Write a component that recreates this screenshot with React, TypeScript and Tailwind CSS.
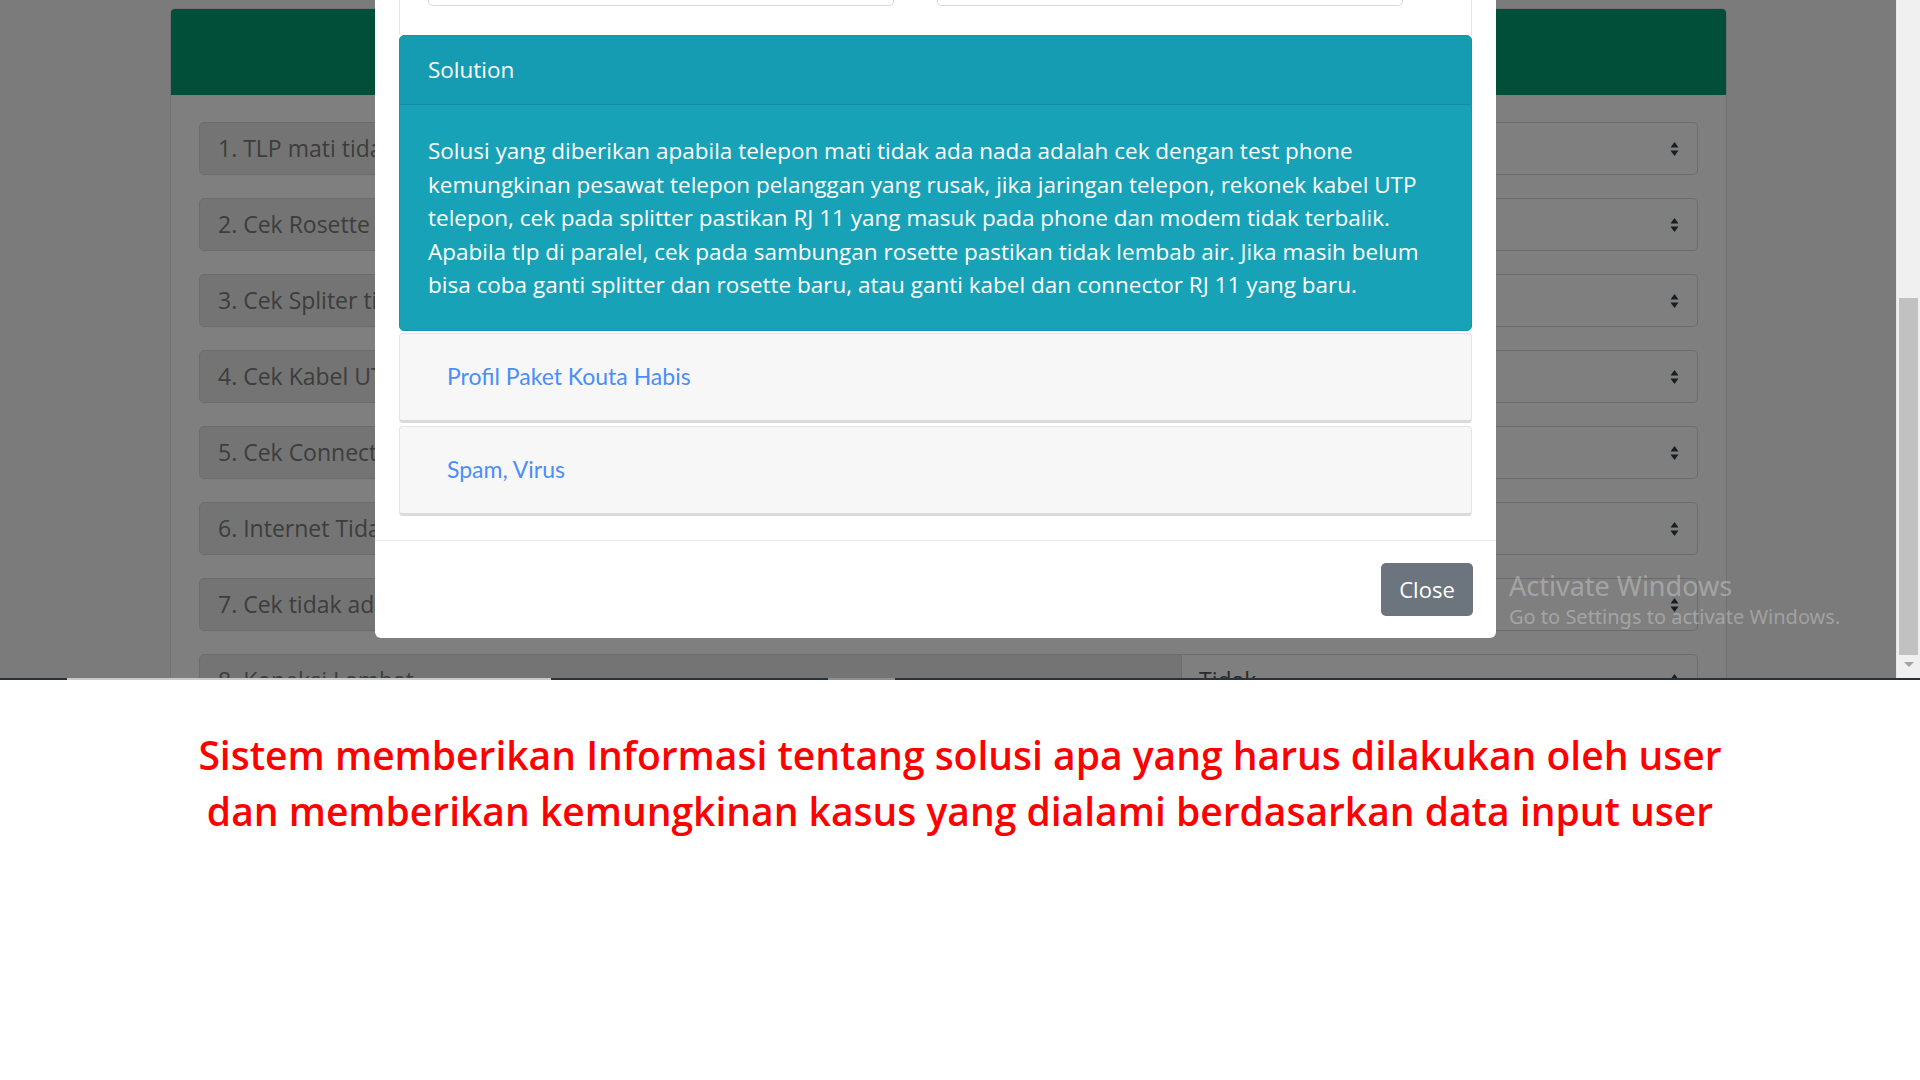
import React from "react";

const rows = [
  { label: "1. TLP mati tidak ada nada", value: "" },
  { label: "2. Cek Rosette lembab", value: "" },
  { label: "3. Cek Spliter tidak terpasang", value: "" },
  { label: "4. Cek Kabel UTP putus", value: "" },
  { label: "5. Cek Connector RJ 11", value: "" },
  { label: "6. Internet Tidak Bisa Browsing", value: "" },
  { label: "7. Cek tidak ada sinyal", value: "" },
  { label: "8. Koneksi Lambat", value: "Tidak" },
];

const cases = ["Profil Paket Kouta Habis", "Spam, Virus"];

function SelectArrows() {
  return (
    <svg width="9" height="16" viewBox="0 0 9 16" className="text-[#343a40]">
      <path d="M4.5 1 L8.5 6.5 H0.5 Z" fill="currentColor" />
      <path d="M4.5 15 L8.5 9.5 H0.5 Z" fill="currentColor" />
    </svg>
  );
}

function Row({ label, value }: { label: string; value: string }) {
  return (
    <div className="flex h-[53px]">
      <div className="w-[983px] flex items-center pl-[18px] bg-[#e9e9e9] border border-[#d8d8d8] rounded-l-[5px] text-[23px] text-[#7a7a7a] whitespace-nowrap">
        {label}
      </div>
      <div className="flex-1 flex items-center justify-between pl-[17px] pr-[18px] bg-white border border-l-0 border-[#d8d8d8] rounded-r-[5px] text-[23px] text-[#555]">
        <span>{value}</span>
        <SelectArrows />
      </div>
    </div>
  );
}

export default function App() {
  return (
    <div className="w-[1920px] h-[1080px] bg-white overflow-hidden font-['Open_Sans',sans-serif]">
      {/* screenshot of the app */}
      <div className="relative h-[678px] overflow-hidden bg-[#f6f6f6]">
        <div className="pt-[8px] pl-[170px]">
          <div className="w-[1557px] bg-white border border-[#e2e2e2] rounded-t-[5px]">
            <div className="h-[86px] bg-[#029e72] rounded-t-[4px]"></div>
            <div className="px-[28px] pt-[27px] flex flex-col gap-[23px]">
              {rows.map((r) => (
                <Row key={r.label} label={r.label} value={r.value} />
              ))}
            </div>
          </div>
        </div>

        {/* modal backdrop */}
        <div className="absolute inset-0 bg-black/50"></div>

        {/* modal */}
        <div className="absolute left-[375px] top-0 w-[1121px] bg-white rounded-b-[6px]">
          <div className="px-[24px]">
            <div className="h-[35px] border-x border-[#e4e4e4] flex gap-[43px] pl-[28px]">
              <div className="w-[466px] h-[6px] border border-t-0 border-[#d9d9d9] rounded-b-[5px]"></div>
              <div className="w-[466px] h-[6px] border border-t-0 border-[#d9d9d9] rounded-b-[5px]"></div>
            </div>

            <div className="bg-[#17a2b8] rounded-[5px] border border-[#1497ac] text-white">
              <div className="h-[69px] flex items-center px-[28px] bg-[#169cb2] border-b border-[#138da1] rounded-t-[5px] text-[22.5px]">
                Solution
              </div>
              <div className="px-[28px] pt-[29px] pb-[28px] text-[22.5px] leading-[33.5px]">
                Solusi yang diberikan apabila telepon mati tidak ada nada adalah cek dengan test phone kemungkinan
                pesawat telepon pelanggan yang rusak, jika jaringan telepon, rekonek kabel UTP telepon, cek pada
                splitter pastikan RJ 11 yang masuk pada phone dan modem tidak terbalik. Apabila tlp di paralel, cek pada
                sambungan rosette pastikan tidak lembab air. Jika masih belum bisa coba ganti splitter dan rosette baru,
                atau ganti kabel dan connector RJ 11 yang baru.
              </div>
            </div>

            <div className="flex flex-col gap-[3px] mt-[2px]">
              {cases.map((c) => (
                <div
                  key={c}
                  className="h-[90px] flex items-center pl-[47px] bg-[#f7f7f7] border border-[#e4e4e4] border-b-[3px] border-b-[#dadada] rounded-[4px] font-['Lato',sans-serif] text-[23px] text-[#4a8ef7]"
                >
                  {c}
                </div>
              ))}
            </div>
          </div>

          <div className="mt-[24px] border-t border-[#e9ecef] flex justify-end px-[23px] py-[22px]">
            <button className="w-[92px] h-[53px] bg-[#6c757d] text-white text-[22px] rounded-[5px]">Close</button>
          </div>
        </div>

        {/* windows watermark */}
        <div className="absolute left-[1509px] top-[572px] text-white/30 font-['Noto_Sans',sans-serif] leading-none">
          <div className="text-[27px]">Activate Windows</div>
          <div className="text-[20px] mt-[8px]">Go to Settings to activate Windows.</div>
        </div>

        {/* browser scrollbar */}
        <div className="absolute right-0 top-0 w-[24px] h-full bg-[#f0f0f0] border-l border-[#e6e6e6]">
          <div className="absolute left-[2px] right-[2px] top-[298px] h-[357px] bg-[#c1c1c1]"></div>
          <div className="absolute left-[7px] top-[662px] w-0 h-0 border-x-[5px] border-x-transparent border-t-[5px] border-t-[#a3a3a3]"></div>
        </div>
      </div>

      {/* edge of the captured window */}
      <div className="flex h-[2px]">
        <div className="w-[67px] bg-[#26333d]"></div>
        <div className="w-[484px] bg-[#c9c9c9]"></div>
        <div className="w-[277px] bg-[#26333d]"></div>
        <div className="w-[67px] bg-[#8a9096]"></div>
        <div className="flex-1 bg-[#26333d]"></div>
      </div>

      {/* caption */}
      <div className="pt-[47px] text-center text-[#ff0000] font-semibold text-[39px] leading-[56px]">
        <p>Sistem memberikan Informasi tentang solusi apa yang harus dilakukan oleh user</p>
        <p>dan memberikan kemungkinan kasus yang dialami berdasarkan data input user</p>
      </div>
    </div>
  );
}
